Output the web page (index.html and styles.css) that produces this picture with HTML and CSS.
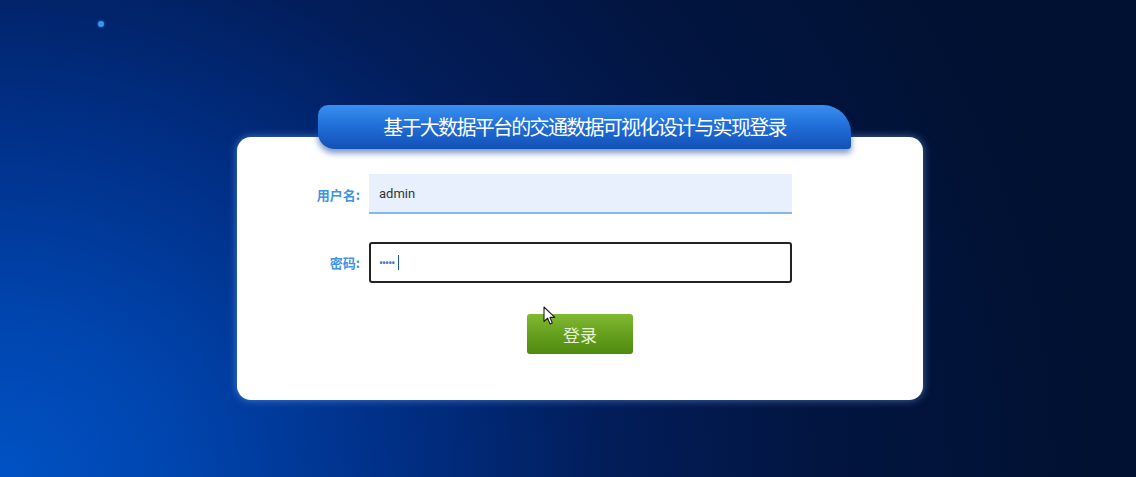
FILE: index.html
```html
<!DOCTYPE html>
<html lang="zh-CN">
<head>
    <meta charset="UTF-8">
    <meta name="viewport" content="width=device-width, initial-scale=1.0">
    <title>登录</title>
    <link rel="stylesheet" href="styles.css">
</head>
<body>

<span class="star"></span>

<div id="login">
    <div class="login-title">基于大数据平台的交通数据可视化设计与实现登录</div>
    <div class="login-box">
        <div class="row">
            <label for="username">用户名:</label>
            <input id="username" class="autofill" type="text" value="admin">
        </div>
        <div class="row">
            <label for="password">密码:</label>
            <div class="field focused">
                <input id="password" type="password" value="12345">
            </div>
        </div>
        <div class="actions">
            <button class="login-button">登录</button>
        </div>
    </div>
</div>

<svg class="cursor" width="13" height="20" viewBox="0 0 13 20">
    <path d="M1 1 L1 15.5 L4.6 12.2 L7.1 18 L9.3 17 L6.9 11.4 L11.8 11.4 Z" fill="#fff" stroke="#222" stroke-width="1.1" stroke-linejoin="round"/>
</svg>

</body>
</html>
```

FILE: styles.css
```css
body {
    margin: 0;
    height: 477px;
    overflow: hidden;
    font-family: "Noto Sans CJK SC", "Noto Sans", sans-serif;
    background: radial-gradient(ellipse 1100px 1000px at 0 100%, #0052c4 0%, #0046b0 15%, #003088 35%, #021d5a 55%, #021540 75%, #011132 100%);
    display: flex;
    flex-direction: column;
    align-items: center;
}
.star {
    position: absolute;
    left: 98px;
    top: 21px;
    width: 6px;
    height: 6px;
    border-radius: 50%;
    background: #3d94e0;
    box-shadow: 0 0 3px #2a7bd0;
}
#login {
    width: 686px;
    margin-left: 24px;
    padding-top: 105px;
}
.login-title {
    position: relative;
    z-index: 1;
    width: 533px;
    height: 44px;
    margin: 0 0 -12px 81px;
    border-radius: 10px 28px 3px 16px;
    background: linear-gradient(#3a8ff0, #2170da 45%, #1659c0 85%, #1450b0);
    box-shadow: 0 4px 6px rgba(10, 60, 150, 0.55);
    color: #fff;
    font-size: 20px;
    line-height: 44px;
    text-align: center;
    letter-spacing: -1.7px;
}
.login-box {
    height: 226px;
    padding-top: 37px;
    background: #fff;
    border-radius: 14px;
    box-shadow: 0 0 8px rgba(130, 180, 255, 0.55);
}
.row {
    display: flex;
    align-items: center;
    margin-bottom: 28px;
}
.row label {
    width: 123px;
    margin-right: 9px;
    text-align: right;
    color: #3d93e4;
    font-size: 13px;
    font-weight: bold;
}
.row input {
    box-sizing: border-box;
    width: 423px;
    height: 40px;
    padding: 0 10px;
    border: none;
    outline: none;
    font-family: Roboto, sans-serif;
    font-size: 13px;
    color: #333;
}
.autofill {
    background: #e8f0fe;
    border-bottom: 2px solid #86b6ee !important;
}
.field {
    position: relative;
}
.field.focused input {
    height: 41px;
    border: 2px solid #222;
    border-radius: 3px;
    padding-left: 8px;
    color: #4a78c8;
    font-size: 12px;
    letter-spacing: -1px;
}
.field.focused::after {
    content: "";
    position: absolute;
    left: 29px;
    top: 13px;
    width: 1px;
    height: 15px;
    background: #1a56c0;
}
.actions {
    display: flex;
    justify-content: center;
    padding-top: 3px;
}
.login-button {
    width: 106px;
    height: 40px;
    border: none;
    border-radius: 3px;
    background: linear-gradient(#80b932, #67a01e 50%, #4f8a10);
    color: #e6f3d6;
    font-family: "Noto Sans CJK SC", sans-serif;
    font-size: 17px;
    cursor: pointer;
}
.cursor {
    position: absolute;
    left: 543px;
    top: 306px;
}
```
